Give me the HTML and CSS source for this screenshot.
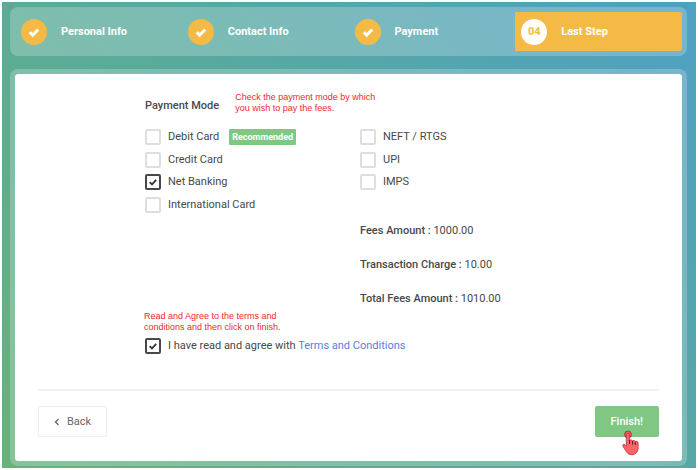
FILE: index.html
```html
<!DOCTYPE html>
<html lang="en">
<head>
<meta charset="utf-8">
<title>Payment – Last Step</title>
<link rel="stylesheet" href="styles.css">
</head>
<body>
<main class="page">
  <nav class="steps" aria-label="Progress">
    <a class="step" href="#personal"><span class="dot"><svg viewBox="0 0 12 12"><path d="M1.8 6.2l2.9 2.9 5.5-5.6"/></svg></span>Personal Info</a>
    <a class="step" href="#contact"><span class="dot"><svg viewBox="0 0 12 12"><path d="M1.8 6.2l2.9 2.9 5.5-5.6"/></svg></span>Contact Info</a>
    <a class="step" href="#payment"><span class="dot"><svg viewBox="0 0 12 12"><path d="M1.8 6.2l2.9 2.9 5.5-5.6"/></svg></span>Payment</a>
    <a class="step current" href="#last" aria-current="step"><span class="dot">04</span>Last Step</a>
  </nav>

  <form class="card">
    <div class="fields">
      <div class="heading">
        <h1>Payment Mode</h1>
        <p class="note">Check the payment mode by which<br>you wish to pay the fees.</p>
      </div>
      <div class="columns">
        <div class="options">
          <label class="option"><input type="checkbox">Debit Card <span class="tag">Recommended</span></label>
          <label class="option"><input type="checkbox">Credit Card</label>
          <label class="option"><input type="checkbox" checked>Net Banking</label>
          <label class="option"><input type="checkbox">International Card</label>
        </div>
        <div class="options">
          <label class="option"><input type="checkbox">NEFT / RTGS</label>
          <label class="option"><input type="checkbox">UPI</label>
          <label class="option"><input type="checkbox">IMPS</label>
        </div>
        <div class="amounts">
          <p><strong>Fees Amount :</strong> 1000.00</p>
          <p><strong>Transaction Charge :</strong> 10.00</p>
          <p><strong>Total Fees Amount :</strong> 1010.00</p>
        </div>
      </div>
      <p class="note">Read and Agree to the terms and<br>conditions and then click on finish.</p>
      <div class="option agree">
        <input type="checkbox" id="agree" checked>
        <label for="agree">I have read and agree with <a href="#terms">Terms and Conditions</a></label>
      </div>
    </div>
    <div class="actions">
      <button class="button back" type="button"><svg viewBox="0 0 6 8"><path d="M4.5 1L1.5 4l3 3"/></svg>Back</button>
      <button class="button finish" type="button">Finish!
        <svg class="pointer" viewBox="0 0 18 27" aria-hidden="true">
          <circle class="ring" cx="6" cy="4.5" r="3.4"/>
          <path class="hand" d="M4.3 5.2c0-2.4 3.2-2.4 3.2 0v5.6c.4-1.3 2.8-1.2 3 .2.6-1 2.6-.6 2.8.7.7-.8 2.8-.4 2.8 1.2v5.2c0 3.6-2.5 6.6-6.2 6.6-3.4 0-5-1.7-6.3-4.2L.9 16.2c-.8-1.7 1.2-2.5 2.2-1.4l1.2 1.3z"/>
          <path class="lines" d="M7.5 10v4M10.5 11v3.5M13.3 12v3"/>
        </svg>
      </button>
    </div>
  </form>
</main>
</body>
</html>
```

FILE: styles.css
```css
* {
  box-sizing: border-box;
}

body {
  margin: 0;
  padding: 2px;
  background: #fff;
  color: #484848;
  font: 11px/16px Roboto, sans-serif;
}

h1,
p {
  margin: 0;
}

a {
  color: #5283dc;
  text-decoration: none;
}

.page {
  min-height: calc(100vh - 4px);
  padding: 5px 9px 2px 8px;
  background: linear-gradient(45deg, #66b37a, #57a9a0 55%, #4fa0c4);
}

.steps {
  display: grid;
  grid-template-columns: repeat(4, 1fr);
  margin-bottom: 13px;
  padding: 5px;
  border-radius: 8px;
  background: rgba(255, 255, 255, 0.22);
}

.step {
  display: flex;
  align-items: center;
  gap: 14px;
  height: 39px;
  padding-left: 6px;
  color: #fff;
  font-weight: 700;
}

.step.current {
  border-radius: 0 3px 3px 0;
  background: #f5ba45;
}

.dot {
  display: flex;
  align-items: center;
  justify-content: center;
  width: 26px;
  height: 26px;
  border-radius: 50%;
  background: #f5ba45;
}

.dot svg {
  width: 12px;
  height: 12px;
  fill: none;
  stroke: #fff;
  stroke-width: 3;
}

.current .dot {
  background: #fff;
  color: #f5ba45;
}

.card {
  padding: 18px 23px 24px;
  border: 5px solid rgba(255, 255, 255, 0.22);
  border-radius: 8px;
  background: #fff;
  background-clip: padding-box;
}

.fields {
  padding-left: 107px;
}

.heading {
  display: flex;
  align-items: flex-start;
  gap: 17px;
  margin-bottom: 12px;
}

.heading h1 {
  margin-top: 6px;
  font-size: 11px;
  font-weight: 500;
}

.note {
  margin-left: -1px;
  color: #f01f2e;
  font: 9px/11px "Liberation Sans", sans-serif;
}

.columns {
  display: grid;
  grid-template-columns: 215px 1fr;
}

.options {
  display: grid;
  grid-template-rows: repeat(4, 1fr);
  align-items: center;
  height: 90px;
}

.option {
  display: flex;
  align-items: center;
  gap: 7px;
}

.option input {
  width: 16px;
  height: 16px;
  margin: 0;
  border: 2px solid #dedede;
  border-radius: 2px;
  background: #fff;
  appearance: none;
}

.option input:checked {
  border-color: #484848;
  background: url("data:image/svg+xml,%3Csvg xmlns='http://www.w3.org/2000/svg' viewBox='0 0 12 12'%3E%3Cpath d='M2.7 6.2l2.3 2.2 4.2-4.5' fill='none' stroke='%23333' stroke-width='1.8'/%3E%3C/svg%3E") center / 12px;
}

.tag {
  margin-left: 3px;
  padding: 0 3px;
  border-radius: 1px;
  background: #7fc782;
  color: #fff;
  font-size: 9px;
  font-weight: 700;
}

.amounts {
  display: grid;
  grid-column: 2;
  gap: 18px;
  margin: 7px 0 4px;
}

.amounts strong {
  font-weight: 500;
}

.agree {
  margin-top: 5px;
}

.actions {
  display: flex;
  justify-content: space-between;
  margin-top: 35px;
  padding-top: 15px;
  border-top: 2px solid #f0f0f0;
}

.button {
  display: flex;
  position: relative;
  align-items: center;
  justify-content: center;
  height: 31px;
  padding: 0 15px;
  border: 1px solid #e7eef4;
  border-radius: 2px;
  background: #fff;
  color: #666;
  font: 11px/16px Roboto, sans-serif;
}

.back svg {
  width: 6px;
  height: 8px;
  margin-right: 7px;
  fill: none;
  stroke: #666;
  stroke-width: 1.3;
}

.finish {
  border-color: #7fc782;
  background: #7fc782;
  color: #fff;
  font-weight: 500;
}

.pointer {
  position: absolute;
  top: 23px;
  left: 26px;
  width: 18px;
  height: 27px;
}

.ring {
  fill: #ef5660;
  stroke: #b0343c;
}

.hand {
  fill: #ff6268;
  stroke: #a63a40;
  stroke-width: 0.8;
}

.lines {
  fill: none;
  stroke: #40262a;
}
```
